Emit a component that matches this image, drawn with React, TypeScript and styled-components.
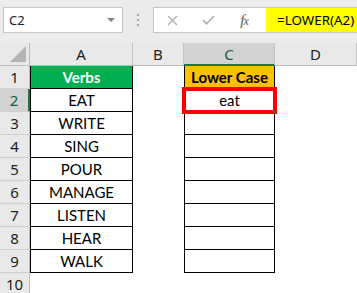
import React from "react";
import styled, { createGlobalStyle } from "styled-components";

const Global = createGlobalStyle`
  html, body { margin: 0; padding: 0; background: #ffffff; }
  body { width: 357px; height: 293px; overflow: hidden; }
`;

const Frame = styled.div`
  width: 357px;
  height: 293px;
  overflow: hidden;
  background: #ffffff;
  display: flex;
  flex-direction: column;
`;

const TopBar = styled.div`
  height: 43px;
  flex: none;
  box-sizing: border-box;
  background: #ebebeb;
  display: flex;
  align-items: flex-start;
  padding: 7px 0 0 3px;
`;

const NameBox = styled.div`
  width: 120px;
  height: 26px;
  box-sizing: border-box;
  background: #ffffff;
  border: 1px solid #c6c6c6;
  display: flex;
  align-items: center;
  justify-content: space-between;
  padding: 0 7px 0 5px;
  font-family: "Noto Sans", sans-serif;
  font-size: 13px;
  color: #222222;
`;

const DropArrow = styled.span`
  width: 0;
  height: 0;
  border-left: 4px solid transparent;
  border-right: 4px solid transparent;
  border-top: 4px solid #808080;
`;

const Grip = styled.div`
  width: 30px;
  height: 26px;
  display: flex;
  flex-direction: column;
  align-items: center;
  gap: 3px;
  padding-top: 7px;
  box-sizing: border-box;
`;

const GripDot = styled.span`
  width: 2px;
  height: 2px;
  background: #a8a8a8;
`;

const FormulaBox = styled.div`
  flex: 1;
  height: 26px;
  box-sizing: border-box;
  border: 1px solid #c6c6c6;
  border-right: none;
  display: flex;
  background: #ffffff;
`;

const ButtonArea = styled.div`
  width: 112px;
  display: grid;
  grid-template-columns: 36px 36px 36px;
  align-items: center;
  justify-items: center;
`;

const FxText = styled.span`
  font-family: "Liberation Serif", serif;
  font-style: italic;
  font-size: 15px;
  color: #5a5a5a;
  letter-spacing: -1px;
  & > small {
    font-size: 12px;
  }
`;

const FormulaInput = styled.div`
  flex: 1;
  background: #ffff00;
  display: flex;
  align-items: center;
  padding-left: 11px;
  font-family: "Noto Sans", sans-serif;
  font-size: 13.4px;
  color: #000000;
  white-space: nowrap;
`;

const Sheet = styled.div`
  display: grid;
  grid-template-columns: 30px 103px 51px 91px 1fr;
  grid-auto-rows: 23px;
`;

const Corner = styled.div`
  box-sizing: border-box;
  background: #e9e9e9;
  border-right: 1px solid #bcbcbc;
  border-bottom: 1px solid #bcbcbc;
  display: flex;
  align-items: flex-end;
  justify-content: flex-end;
  padding: 0 3px 3px 0;
`;

const ColHeader = styled.div<{ $sel?: boolean }>`
  box-sizing: border-box;
  background: ${(p) => (p.$sel ? "#d2d2d2" : "#e9e9e9")};
  border-right: 1px solid #c4c4c4;
  border-bottom: ${(p) => (p.$sel ? "2px solid #217346" : "1px solid #bcbcbc")};
  display: flex;
  align-items: center;
  justify-content: center;
  font-family: "Noto Sans", sans-serif;
  font-size: 15px;
  color: ${(p) => (p.$sel ? "#1f5a3d" : "#222222")};
`;

const RowHeader = styled.div<{ $sel?: boolean }>`
  box-sizing: border-box;
  background: ${(p) => (p.$sel ? "#d2d2d2" : "#e9e9e9")};
  border-right: ${(p) => (p.$sel ? "2px solid #217346" : "1px solid #bcbcbc")};
  border-bottom: 1px solid #d0d0d0;
  display: flex;
  align-items: center;
  justify-content: center;
  font-family: "Noto Sans", sans-serif;
  font-size: 15px;
  color: ${(p) => (p.$sel ? "#1f5a3d" : "#222222")};
`;

const Cell = styled.div<{
  $boxed?: boolean;
  $fill?: string;
  $bold?: boolean;
  $color?: string;
  $active?: boolean;
}>`
  position: relative;
  box-sizing: border-box;
  background: ${(p) => p.$fill ?? "#ffffff"};
  border-left: ${(p) => (p.$boxed ? "1px solid #000000" : "none")};
  border-right: ${(p) => (p.$boxed ? "1px solid #000000" : "none")};
  border-bottom: ${(p) => (p.$boxed ? "1px solid #000000" : "none")};
  display: flex;
  align-items: center;
  justify-content: center;
  font-family: Lato, "Liberation Sans", sans-serif;
  font-size: 15px;
  font-weight: ${(p) => (p.$bold ? 700 : 400)};
  color: ${(p) => p.$color ?? "#000000"};
  white-space: nowrap;
  ${(p) =>
    p.$active
      ? `
    outline: 4px solid #ff0000;
    outline-offset: -2px;
    z-index: 1;
    &::after {
      content: "";
      position: absolute;
      right: -2px;
      bottom: -2px;
      width: 3px;
      height: 3px;
      background: #217346;
    }
  `
      : ""}
`;

const columns = ["A", "B", "C", "D"];
const verbs = ["EAT", "WRITE", "SING", "POUR", "MANAGE", "LISTEN", "HEAR", "WALK"];

export default function App() {
  const rows = Array.from({ length: 10 }, (_, i) => i + 1);
  return (
    <Frame>
      <Global />
      <TopBar>
        <NameBox>
          <span>C2</span>
          <DropArrow />
        </NameBox>
        <Grip>
          <GripDot />
          <GripDot />
          <GripDot />
        </Grip>
        <FormulaBox>
          <ButtonArea>
            <svg width="11" height="11" viewBox="0 0 11 11">
              <path d="M1 1 L10 10 M10 1 L1 10" stroke="#b3b3b3" strokeWidth="1.4" fill="none" />
            </svg>
            <svg width="13" height="10" viewBox="0 0 13 10">
              <path d="M1 5 L4.5 8.8 L12 1" stroke="#b3b3b3" strokeWidth="1.8" fill="none" />
            </svg>
            <FxText>
              f<small>x</small>
            </FxText>
          </ButtonArea>
          <FormulaInput>=LOWER(A2)</FormulaInput>
        </FormulaBox>
      </TopBar>
      <Sheet>
        <Corner>
          <svg width="16" height="16" viewBox="0 0 16 16">
            <path d="M16 0 L16 16 L0 16 Z" fill="#b5b5b5" />
          </svg>
        </Corner>
        {columns.map((c) => (
          <ColHeader key={c} $sel={c === "C"}>
            {c}
          </ColHeader>
        ))}
        {rows.map((r) => {
          const inTable = r <= 9;
          return (
            <React.Fragment key={r}>
              <RowHeader $sel={r === 2}>{r}</RowHeader>
              {r === 1 ? (
                <Cell $boxed $fill="#00b050" $bold $color="#ffffff">
                  Verbs
                </Cell>
              ) : (
                <Cell $boxed={inTable}>{inTable ? verbs[r - 2] : ""}</Cell>
              )}
              <Cell />
              {r === 1 ? (
                <Cell $boxed $fill="#ffc000" $bold>
                  Lower Case
                </Cell>
              ) : r === 2 ? (
                <Cell $boxed $active>
                  eat
                </Cell>
              ) : (
                <Cell $boxed={inTable} />
              )}
              <Cell />
            </React.Fragment>
          );
        })}
      </Sheet>
    </Frame>
  );
}
